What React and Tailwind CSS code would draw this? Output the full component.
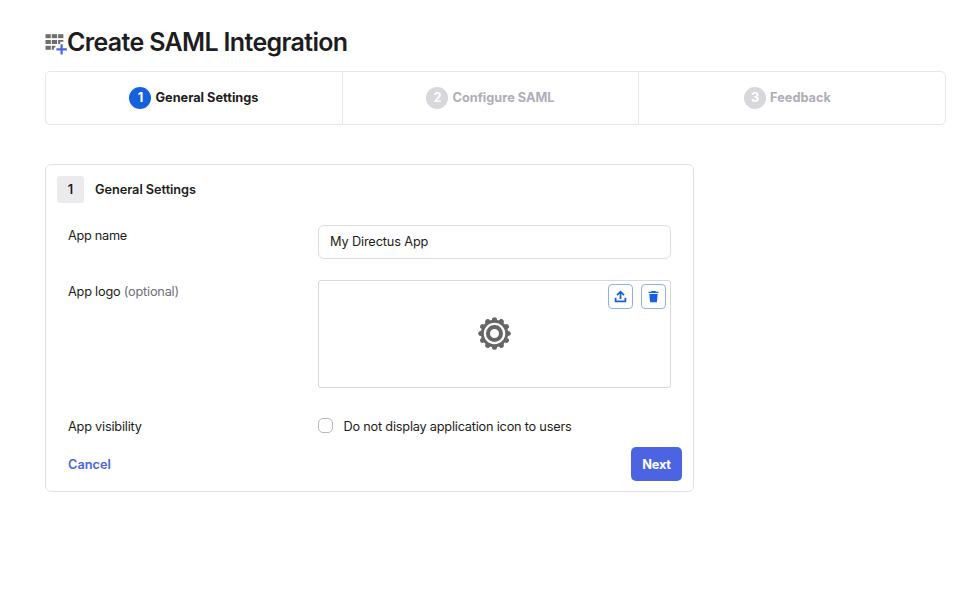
const steps = [
  { n: 1, label: 'General Settings', cell: 'w-[297px] border-r', active: true },
  { n: 2, label: 'Configure SAML', cell: 'w-[296px] border-r' },
  { n: 3, label: 'Feedback', cell: 'flex-1 pr-[9px]' },
];

const teeth = [0, 30, 60, 90, 120, 150, 180, 210, 240, 270, 300, 330];

function GridPlusIcon() {
  return (
    <svg className="mt-[1px] h-[24px] w-[22px] shrink-0" viewBox="0 0 22 24">
      <g fill="#6e6e6e">
        <rect x="0.5" y="3.2" width="5.3" height="4" />
        <rect x="6.8" y="3.2" width="5.3" height="4" />
        <rect x="13.1" y="3.2" width="5.3" height="4" />
        <rect x="0.5" y="9" width="5.3" height="4" />
        <rect x="6.8" y="9" width="5.3" height="4" />
        <path d="M13.1 9h5.3v1.8h-3.2v2.2h-2.1z" />
        <rect x="0.5" y="14.8" width="5.3" height="4" />
        <path d="M6.8 14.8h3.6v1.6H9v2.4H6.8z" />
      </g>
      <path d="M16.6 13.2v10.3M11.4 18.4h10.4" stroke="#4c64e1" strokeWidth="2.2" />
    </svg>
  );
}

function GearIcon() {
  return (
    <svg className="h-[34px] w-[34px]" viewBox="-16.5 -16.5 34 34">
      <g fill="#666">
        {teeth.map((a) => (
          <path key={a} transform={`rotate(${a})`} d="M-3-12L-2.1-15.4Q0-17.2 2.1-15.4L3-12z" />
        ))}
      </g>
      <circle r="12.2" fill="none" stroke="#666" strokeWidth="2.9" />
      <circle r="6.5" fill="none" stroke="#666" strokeWidth="4" />
    </svg>
  );
}

function IconButton({ label, children }) {
  return (
    <button aria-label={label} className="flex h-[25px] w-[25px] items-center justify-center rounded-[4px] border border-[#8fb0ef] bg-white">
      {children}
    </button>
  );
}

export default function App() {
  return (
    <div className="h-[589px] w-[967px] overflow-hidden bg-white pt-[28px] pl-[45px] font-['Inter',sans-serif] text-[12.75px] leading-[20px] tracking-[-0.22px] text-[#1d1d21]">
      <h1 className="flex h-[28px] items-center text-[25px] leading-[28px] font-semibold tracking-[-0.66px]">
        <GridPlusIcon />
        <span className="whitespace-nowrap">Create SAML Integration</span>
      </h1>

      <ol className="mt-[15px] flex h-[54px] w-[901px] rounded-[5px] border border-[#e8e8ea]">
        {steps.map((s) => (
          <li key={s.n} className={`flex items-center justify-center gap-[4px] border-[#e8e8ea] font-bold tracking-[0px] ${s.cell} ${s.active ? '' : 'text-[#aeaeb8]'}`}>
            <span className={`flex h-[22px] w-[22px] items-center justify-center rounded-full text-white ${s.active ? 'bg-[#1662dd]' : 'bg-[#d7d7dc]'}`}>{s.n}</span>
            <span className="whitespace-nowrap">{s.label}</span>
          </li>
        ))}
      </ol>

      <section className="mt-[39px] h-[328px] w-[649px] rounded-[6px] border border-[#e1e1e3] pt-[11px] pr-[11px] pl-[11px]">
        <header className="flex h-[27px] items-center font-semibold tracking-[-0.05px]">
          <span className="flex h-[27px] w-[27px] items-center justify-center rounded-[3px] bg-[#ebebed]">1</span>
          <h2 className="ml-[11px]">General Settings</h2>
        </header>

        <div className="mt-[22px] ml-[11px] flex h-[34px]">
          <label className="w-[250px] pt-[1px] tracking-[-0.3px]">App name</label>
          <div className="flex h-[34px] w-[353px] items-center rounded-[6px] border border-[#dedee0] px-[11px] tracking-[-0.14px]">My Directus App</div>
        </div>

        <div className="mt-[21px] ml-[11px] flex h-[108px]">
          <label className="w-[250px] pt-[2px]">
            App logo <span className="text-[#6e6e78]">(optional)</span>
          </label>
          <div className="relative flex h-[108px] w-[353px] items-center justify-center rounded-[3px] border border-[#d9d9db]">
            <GearIcon />
            <div className="absolute top-[3px] right-[4px] flex gap-[8px]">
              <IconButton label="Upload">
                <svg className="h-[13px] w-[13px]" viewBox="0 0 13 13" fill="none" stroke="#1662dd" strokeWidth="1.8">
                  <path d="M6.5 9V2M3 5.2l3.5-3.5L10 5.2M1.6 7.8v3.6h9.8V7.8" />
                </svg>
              </IconButton>
              <IconButton label="Delete">
                <svg className="h-[13px] w-[13px]" viewBox="0 0 13 13" fill="#1662dd">
                  <path d="M4.6 1h3.8l.5.7h2.5v1.4H1.6V1.7h2.5zM2.3 3.9h8.4l-.8 8.4H3.1z" />
                </svg>
              </IconButton>
            </div>
          </div>
        </div>

        <div className="mt-[28px] ml-[11px] flex h-[20px] items-center">
          <span className="w-[250px] pt-[1px]">App visibility</span>
          <span className="mb-[1px] h-[15px] w-[15px] rounded-[5px] border-[1.5px] border-[#b8b8bc]" />
          <span className="ml-[10.5px] pt-[1px] whitespace-nowrap">Do not display application icon to users</span>
        </div>

        <footer className="mt-[11px] ml-[11px] flex h-[34px] items-center justify-between font-semibold tracking-[0px]">
          <a className="pt-[1px] text-[#4c64e1]">Cancel</a>
          <button className="h-[34px] w-[51px] rounded-[5px] bg-[#4c64e1] pt-[1px] font-bold tracking-[-0.15px] text-white">Next</button>
        </footer>
      </section>
    </div>
  );
}
